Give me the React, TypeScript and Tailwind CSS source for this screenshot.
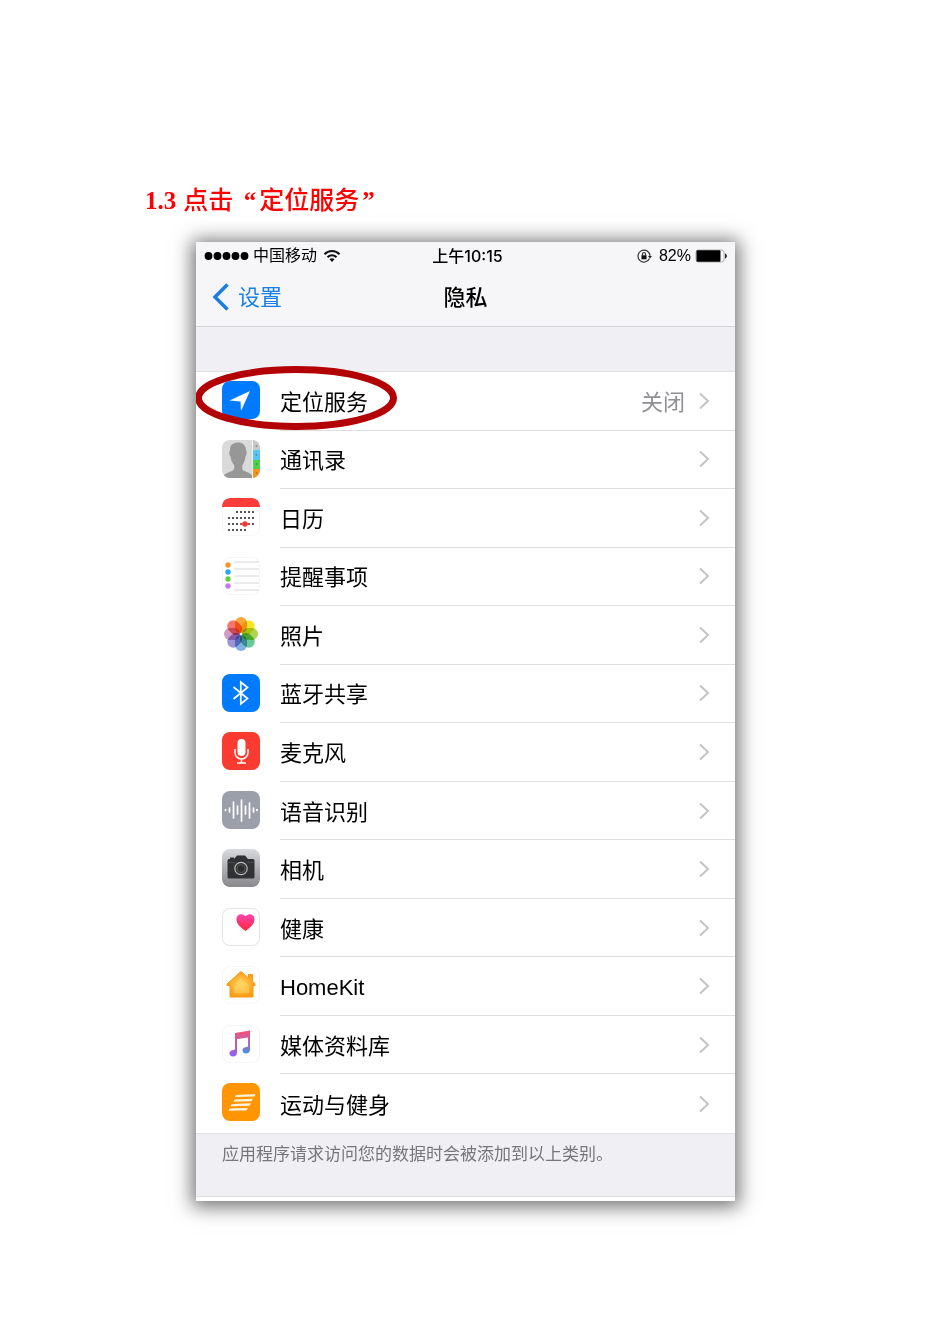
import type { ReactNode } from 'react';

function Tile({ className = '', children }: { className?: string; children: ReactNode }) {
  return (
    <svg viewBox="0 0 38 38" aria-hidden="true" className={`size-[38px] shrink-0 rounded-lg ${className}`}>
      {children}
    </svg>
  );
}

const whiteTile = 'bg-white ring-1 ring-inset ring-[#f6f6f6]';

const LocationIcon = () => (
  <Tile className="bg-[#007aff]">
    <path d="M28 10 7.5 19.5 18.5 20.5 19 30Z" fill="#fff" />
  </Tile>
);

const ContactsIcon = () => (
  <Tile className="bg-[#dadada]">
    <rect x="31" width="7" height="10" fill="#c9c9c9" />
    <rect x="31" y="10" width="7" height="10" fill="#5ac4f5" />
    <rect x="31" y="20" width="7" height="9" fill="#4fd04a" />
    <rect x="31" y="29" width="7" height="9" fill="#f79320" />
    <path d="M30.500 0V38" stroke="#f4f4f4" />
    <path d="M34.500 5v2M34.500 14v2M34.500 23v2M34.500 32v2" stroke="#555" strokeOpacity=".5" strokeWidth="1.500" />
    <path d="M1 36.500C3 33 8 32 11 30.500 12.500 29.500 12.500 27 12 25 10 22.500 9 20 8.500 16.500 6.500 14 7.500 12 8 10 8 4.500 11.500 2.500 16 2.500S24 5 24 10C25 12 25 14.500 23.500 16.500 23 20 22 23 20.500 25 20 28 20 29.500 21.500 30.500 24 32 28 33 30 35V38H4Z" fill="#979797" />
  </Tile>
);

const calendarDots: [number, number][] = [
  ...[15, 19, 23, 27, 31].map((x): [number, number] => [x, 14]),
  ...[7, 11, 15, 19, 23, 27, 31].map((x): [number, number] => [x, 20]),
  ...[7, 11, 15, 19, 23, 27, 31].map((x): [number, number] => [x, 26]),
  ...[7, 11, 15, 19, 23].map((x): [number, number] => [x, 32]),
];

const CalendarIcon = () => (
  <Tile className={whiteTile}>
    <path d="M0 9V8A8 8 0 0 1 8 0H30A8 8 0 0 1 38 8V9Z" fill="#fc3d39" />
    {calendarDots.map(([x, y]) => (
      <rect key={`${x}-${y}`} x={x - 1} y={y - 1} width="2" height="2" fill="#555" />
    ))}
    <path d="M18 26h10" stroke="#ef4b45" strokeWidth="1.500" />
    <circle cx="23" cy="26" r="2.700" fill="#ef3b35" />
  </Tile>
);

const RemindersIcon = () => (
  <Tile className={whiteTile}>
    {['#fc9426', '#27a9e8', '#63cf3a', '#c27be8'].map((color, i) => (
      <circle key={color} cx="6" cy={8 + i * 7} r="2.700" fill={color} />
    ))}
    <path d="M12 5H37M12 12H37M12 19H37M12 26H37M12 33H37" stroke="#d6d6d9" />
  </Tile>
);

const PhotosIcon = () => (
  <Tile>
    {['#fba63a', '#efe62a', '#aed653', '#6cc79b', '#80b1e2', '#9d94d8', '#d39bc6', '#f5776b'].map((color, i) => (
      <rect key={color} x="13" y="2" width="12" height="16" rx="6" fill={color} transform={`rotate(${i * 45} 19 19)`} className="mix-blend-multiply" />
    ))}
  </Tile>
);

const BluetoothIcon = () => (
  <Tile className="bg-[#007aff]">
    <path d="M11.500 13 25.500 24.500 18.800 30V8L25.500 13.500 11.500 25" fill="none" stroke="#fff" strokeWidth="1.700" />
  </Tile>
);

const MicrophoneIcon = () => (
  <Tile className="bg-[#fc3b30]">
    <rect x="15.500" y="7" width="8" height="17" rx="4" fill="#fff" />
    <path d="M13 17v3.500a6.500 6.500 0 0 0 13 0V17M19.500 27v4M15 31h9" fill="none" stroke="#fff" strokeWidth="1.500" />
  </Tile>
);

const SpeechIcon = () => (
  <Tile className="bg-[#9b9faa]">
    <path d="M3.500 18.500v1M7.500 17v4M11.500 11v16M15.500 15v8M19.500 9v21M23.500 15v8M27.500 12v15M31.500 17v4M35 18.500v1" stroke="#fff" strokeWidth="1.700" strokeLinecap="round" />
  </Tile>
);

const CameraIcon = () => (
  <Tile className="bg-linear-to-b from-[#d9dadd] to-[#89898d]">
    <path d="M7 10h5l3-3.500h8L26 10h5q1.500 0 1.500 1.500V28q0 1.500-1.500 1.500H7Q5.500 29.500 5.500 28V11.500Q5.500 10 7 10Z" fill="#303234" />
    <path d="M8 8.500h4v3H8Z" fill="#303234" />
    <path d="M6 13.500h7M25 13.500h7" stroke="#4a4d4f" />
    <circle cx="19" cy="19.500" r="6.200" fill="#303234" stroke="#bbb" strokeWidth="1.200" />
    <circle cx="19" cy="19.500" r="4" fill="#2c2e30" stroke="#555" />
  </Tile>
);

const HealthIcon = () => (
  <Tile className="bg-white ring-1 ring-inset ring-[#e5e5e7]">
    <defs>
      <linearGradient id="heart" x2="0" y2="1">
        <stop stopColor="#ff44b1" />
        <stop offset="1" stopColor="#fb2737" />
      </linearGradient>
    </defs>
    <path d="M23.500 23C17 18.500 14.500 15 14.500 11.500 14.500 6 20.500 4.500 23.500 8.500 26.500 4.500 32.500 6 32.500 11.500 32.500 15 30 18.500 23.500 23Z" fill="url(#heart)" />
  </Tile>
);

const HomeIcon = () => (
  <Tile className={whiteTile}>
    <defs>
      <radialGradient id="house">
        <stop stopColor="#ffd65e" />
        <stop offset="1" stopColor="#fa9d17" />
      </radialGradient>
    </defs>
    <path d="M19 5.500 26.500 12V8.500h4V15.500L33 17.500V19.500H31V31H8V19.500H5V18Z" fill="url(#house)" stroke="#f79717" strokeLinejoin="round" />
    <path d="M19 12.500 27 19v8H12V19Z" fill="#ffdc70" fillOpacity=".4" />
  </Tile>
);

const MusicIcon = () => (
  <Tile className={whiteTile}>
    <defs>
      <linearGradient id="note-beam" x2="0" y2="1">
        <stop stopColor="#fb4d70" />
        <stop offset=".5" stopColor="#b765b8" />
        <stop offset="1" stopColor="#3f95e0" />
      </linearGradient>
      <linearGradient id="note-stem" x2="0" y2="1">
        <stop stopColor="#e2558c" />
        <stop offset="1" stopColor="#8a63f2" />
      </linearGradient>
    </defs>
    <path d="M13 8 28 5.500V24.500C28 27 26.500 28.500 24 28.500 21.500 28.500 20.500 27 20.500 25.500 20.500 22 24 22.500 26 21.500V12.500L13 14.500Z" fill="url(#note-beam)" />
    <path d="M13 11H15V27.500C15 30 13.500 31.500 11 31.500 8.500 31.500 7.500 30 7.500 28.500 7.500 25 11 25.500 13 24.500Z" fill="url(#note-stem)" />
  </Tile>
);

const MotionIcon = () => (
  <Tile className="bg-[#ff9500]">
    <path d="M14 12 33.500 11 32.500 13.500 13 14ZM12.500 16.500 31 15.800 29.500 18.200 11.500 18.700ZM9.500 21 29 20.300 27.500 22.800 8.500 23.300ZM7.500 25.600 26 25 24.500 27.500 6.500 27.700Z" fill="#fff3dc" />
  </Tile>
);

const items: { label: string; value?: string; Icon: () => ReactNode }[] = [
  { label: '定位服务', value: '关闭', Icon: LocationIcon },
  { label: '通讯录', Icon: ContactsIcon },
  { label: '日历', Icon: CalendarIcon },
  { label: '提醒事项', Icon: RemindersIcon },
  { label: '照片', Icon: PhotosIcon },
  { label: '蓝牙共享', Icon: BluetoothIcon },
  { label: '麦克风', Icon: MicrophoneIcon },
  { label: '语音识别', Icon: SpeechIcon },
  { label: '相机', Icon: CameraIcon },
  { label: '健康', Icon: HealthIcon },
  { label: 'HomeKit', Icon: HomeIcon },
  { label: '媒体资料库', Icon: MusicIcon },
  { label: '运动与健身', Icon: MotionIcon },
];

function StatusBar() {
  return (
    <div className="grid h-7 grid-cols-[1fr_auto_1fr] items-center px-2 text-base">
      <div className="flex items-center gap-1">
        <svg viewBox="0 0 45 10" aria-hidden="true" className="h-[10px] w-[45px]">
          {[4.5, 13.5, 22.5, 31.5, 40.5].map((x) => (
            <circle key={x} cx={x} cy="5" r="3.900" />
          ))}
        </svg>
        <span>中国移动</span>
        <svg viewBox="0 0 18 14" aria-hidden="true" className="ml-0.5 h-[14px] w-[18px]" fill="none" stroke="#111" strokeWidth="2">
          <path d="M1.500 5.200c4-4.300 11-4.300 15 0M4.500 8.200c2.500-2.700 6.500-2.700 9 0" />
          <path d="m9 13-2.500-2.700c1.500-1.400 3.500-1.400 5 0Z" fill="#111" stroke="none" />
        </svg>
      </div>
      <span className="pl-1 font-['Inter','Noto_Sans_CJK_SC',sans-serif] font-medium">上午10:15</span>
      <div className="flex items-center justify-end">
        <svg viewBox="0 0 16 14" aria-hidden="true" className="mr-1.5 h-[14px] w-4" fill="none" stroke="#333">
          <path d="M12.500 9.500A6 6 0 1 1 13 7" strokeWidth="1.200" />
          <path d="m11 7 2 2.500L15 7Z" fill="#222" stroke="none" />
          <rect x="4.500" y="6.300" width="5" height="4" fill="#111" stroke="none" />
          <path d="M5.500 7V5a1.500 1.500 0 0 1 3 0v2" strokeWidth="1.200" />
        </svg>
        <span>82%</span>
        <svg viewBox="0 0 32 14" aria-hidden="true" className="ml-1 h-[14px] w-8">
          <rect x="1" y="1" width="28" height="12" rx="2.500" fill="#fff" stroke="#aaa" />
          <rect x="1.500" y="1.300" width="24" height="11.400" rx="1" />
          <path d="M30 4.500c2.500.5 2.500 4.500 0 5Z" fill="#222" />
        </svg>
      </div>
    </div>
  );
}

export default function App() {
  return (
    <main lang="zh-CN" className="min-h-screen bg-white pt-[180px] pb-[143px] font-['Liberation_Sans','Noto_Sans_CJK_SC',sans-serif] text-black">
      <h1 className="flex h-9 items-baseline pl-[145px] font-['Noto_Sans_CJK_SC',sans-serif] text-[25px] leading-9 font-medium text-[#f00]">
        <span className="mr-[7px] font-['Liberation_Serif',serif] font-bold">1.3</span>
        点击
        <span className="w-[26px] pr-[3px] text-right font-['Liberation_Serif',serif] font-bold">“</span>
        定位服务
        <span className="w-[26px] pl-[3px] font-['Liberation_Serif',serif] font-bold">”</span>
      </h1>

      <section className="mt-[26px] mr-[215px] ml-[196px] bg-white pb-1 shadow-[0_2px_18px_4px_rgba(0,0,0,0.55)]">
        <header className="border-b border-[#d3d3d7] bg-[#f6f6f8]">
          <StatusBar />
          <div className="grid h-14 grid-cols-[1fr_auto_1fr] items-center px-4 text-[22px]">
            <a href="#settings" className="flex items-center gap-2 pb-0.5 text-[#1a80e5]">
              <svg viewBox="0 0 18 28" aria-hidden="true" className="h-7 w-[18px]">
                <path d="M15.500 1.500 3 14l12.500 12.500" fill="none" stroke="#1a7ce6" strokeWidth="3.500" />
              </svg>
              设置
            </a>
            <h2 className="pb-0.5 font-medium">隐私</h2>
          </div>
        </header>

        <div className="relative border-b border-[#dedee2] bg-[#efeff4] pt-11">
          <ul className="grid min-h-[763px] auto-rows-fr border-y border-[#e0e0e4] bg-white">
            {items.map(({ label, value, Icon }) => (
              <li key={label} className="group flex">
                <a href={`#${label}`} className="flex flex-1 gap-5 pl-[26px]">
                  <span className="pt-[9px]">
                    <Icon />
                  </span>
                  <span className="flex flex-1 items-center border-b border-[#dfdfe2] pr-[25px] text-[22px] leading-8 group-last:border-b-0">
                    <span className="flex-1 pt-1">{label}</span>
                    {value && <span className="mr-[13px] pt-1 text-[#8f8f94]">{value}</span>}
                    <svg viewBox="0 0 12 18" aria-hidden="true" className="h-[18px] w-3">
                      <path d="m2 1.500 8 7.500-8 7.500" fill="none" stroke="#c4c4c8" strokeWidth="2" />
                    </svg>
                  </span>
                </a>
              </li>
            ))}
          </ul>
          <p className="px-[26px] pt-[9px] pb-[29px] text-[17px] leading-6 text-[#77777b]">
            应用程序请求访问您的数据时会被添加到以上类别。
          </p>
          <div className="pointer-events-none absolute top-[38px] left-0 h-[66px] w-[202px] overflow-hidden">
            <svg viewBox="0 0 202 66" aria-hidden="true" className="h-[66px] w-[202px]">
              <ellipse cx="100" cy="33" rx="97.500" ry="28.500" fill="none" stroke="#b20205" strokeWidth="7" />
            </svg>
          </div>
        </div>
      </section>
    </main>
  );
}
